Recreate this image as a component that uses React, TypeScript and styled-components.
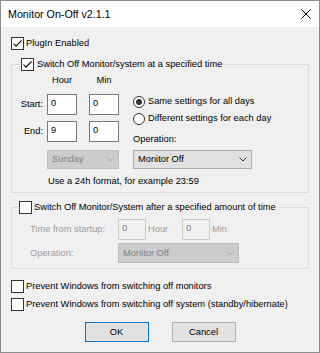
import styled, { createGlobalStyle } from "styled-components";

const GlobalStyle = createGlobalStyle`
  html, body {
    margin: 0;
    padding: 0;
    background: #fff;
  }
  body {
    font-family: "Liberation Sans", Arial, sans-serif;
    font-size: 9.3px;
    color: #000;
  }
`;

const Window = styled.div`
  width: 320px;
  height: 353px;
  box-sizing: border-box;
  border: 1px solid #8c8c8c;
  background: #f0f0f0;
  display: flex;
  flex-direction: column;
`;

const TitleBar = styled.div`
  height: 26px;
  flex-shrink: 0;
  background: #fff;
  display: flex;
  align-items: center;
  justify-content: space-between;
  padding: 0 8px 0 7px;
`;

const Title = styled.span`
  font-size: 10.7px;
  line-height: 13px;
`;

const Body = styled.div`
  display: flex;
  flex-direction: column;
  padding: 10px 10px 0;
`;

const CheckRow = styled.label<{ $gap?: number; $top?: number; $disabled?: boolean }>`
  display: flex;
  align-items: center;
  gap: ${(p) => p.$gap ?? 2}px;
  height: 13px;
  line-height: 13px;
  margin-top: ${(p) => p.$top ?? 0}px;
  color: ${(p) => (p.$disabled ? "#9d9d9d" : "#000")};
  white-space: nowrap;
`;

const Box = styled.span`
  width: 13px;
  height: 13px;
  box-sizing: border-box;
  border: 1px solid #333;
  background: #fff;
  display: flex;
  align-items: center;
  justify-content: center;
  flex-shrink: 0;
`;

const Group = styled.fieldset<{ $top: number }>`
  margin: ${(p) => p.$top}px 0 0;
  padding: 0;
  border: 1px solid #dcdcdc;
  min-width: 0;
`;

const Legend = styled.legend<{ $indent: number }>`
  margin-left: ${(p) => p.$indent}px;
  padding: 0 1px;
  height: 13px;
`;

const TimeLayout = styled.div`
  display: flex;
  gap: 14px;
`;

const Column = styled.div<{ $top?: number }>`
  display: flex;
  flex-direction: column;
  padding-top: ${(p) => p.$top ?? 0}px;
`;

const HeaderRow = styled.div`
  display: flex;
  gap: 12px;
  margin: 4px 0 0 35px;
  line-height: 11px;
`;

const HeaderCell = styled.span`
  width: 30px;
  text-align: center;
`;

const TimeRow = styled.div<{ $top: number }>`
  display: flex;
  align-items: center;
  margin-top: ${(p) => p.$top}px;
`;

const RowLabel = styled.span`
  width: 31px;
  margin-right: 4px;
  text-align: right;
  line-height: 13px;
`;

const NumberInput = styled.input<{ $width: number; $disabled?: boolean }>`
  width: ${(p) => p.$width}px;
  height: 21px;
  box-sizing: border-box;
  margin: 0;
  padding: 2px 0 6px 3px;
  border: 1px solid ${(p) => (p.$disabled ? "#cccccc" : "#7a7a7a")};
  background: ${(p) => (p.$disabled ? "#f0f0f0" : "#fff")};
  color: ${(p) => (p.$disabled ? "#7d7d7d" : "#000")};
  font: inherit;
  line-height: 11px;
  outline: none;
  border-radius: 0;
`;

const Gap = styled.span<{ $w: number }>`
  width: ${(p) => p.$w}px;
  flex-shrink: 0;
`;

const Combo = styled.div<{ $width: number; $height?: number; $top?: number; $disabled?: boolean }>`
  width: ${(p) => p.$width}px;
  height: ${(p) => p.$height ?? 19}px;
  margin-top: ${(p) => p.$top ?? 0}px;
  box-sizing: border-box;
  display: flex;
  align-items: center;
  justify-content: space-between;
  padding: 0 4px 0 4px;
  border: 1px solid ${(p) => (p.$disabled ? "#bfbfbf" : "#adadad")};
  background: ${(p) => (p.$disabled ? "#cccccc" : "#e1e1e1")};
  color: ${(p) => (p.$disabled ? "#838383" : "#000")};
  line-height: 13px;
`;

const RadioRow = styled.label<{ $top?: number }>`
  display: flex;
  align-items: center;
  gap: 3px;
  height: 13px;
  line-height: 13px;
  margin-top: ${(p) => p.$top ?? 0}px;
  white-space: nowrap;
`;

const RadioCircle = styled.span<{ $checked?: boolean }>`
  width: 12px;
  height: 12px;
  box-sizing: border-box;
  border: 1px solid #333;
  border-radius: 50%;
  background: #fff;
  display: flex;
  align-items: center;
  justify-content: center;
  flex-shrink: 0;

  &::after {
    content: "";
    width: 6px;
    height: 6px;
    border-radius: 50%;
    background: #333;
    display: ${(p) => (p.$checked ? "block" : "none")};
  }
`;

const Label = styled.span<{ $top?: number; $width?: number; $disabled?: boolean; $pad?: number }>`
  display: block;
  line-height: 13px;
  margin-top: ${(p) => p.$top ?? 0}px;
  width: ${(p) => (p.$width ? `${p.$width}px` : "auto")};
  padding-left: ${(p) => p.$pad ?? 0}px;
  box-sizing: border-box;
  flex-shrink: 0;
  color: ${(p) => (p.$disabled ? "#9d9d9d" : "#000")};
  white-space: nowrap;
`;

const Hint = styled.div`
  margin: 6px 0 0 36px;
  padding-bottom: 5px;
  line-height: 12px;
`;

const AfterContent = styled.div`
  padding: 5px 0 5px 18px;
`;

const FieldRow = styled.div<{ $top?: number }>`
  display: flex;
  align-items: center;
  margin-top: ${(p) => p.$top ?? 0}px;
`;

const ButtonRow = styled.div`
  display: flex;
  justify-content: center;
  gap: 23px;
  margin-top: 11px;
`;

const Button = styled.button<{ $primary?: boolean }>`
  width: 64px;
  height: 20px;
  margin: 0;
  padding: 0;
  box-sizing: border-box;
  border: 1px solid ${(p) => (p.$primary ? "#0078d7" : "#adadad")};
  background: #e1e1e1;
  color: #000;
  font: inherit;
  line-height: 13px;
  border-radius: 0;
`;

function Check({ checked }: { checked?: boolean }) {
  return (
    <Box>
      {checked && (
        <svg width="11" height="11" viewBox="0 0 11 11">
          <path d="M1.5 5.5 L4 8.2 L9.6 2.3" fill="none" stroke="#000" strokeWidth="1.1" />
        </svg>
      )}
    </Box>
  );
}

function Chevron({ color }: { color: string }) {
  return (
    <svg width="8" height="5" viewBox="0 0 8 5">
      <polyline points="0.5,0.5 4,4 7.5,0.5" fill="none" stroke={color} strokeWidth="1" />
    </svg>
  );
}

export default function App() {
  return (
    <>
      <GlobalStyle />
      <Window>
        <TitleBar>
          <Title>Monitor On-Off v2.1.1</Title>
          <svg width="10" height="10" viewBox="0 0 10 10">
            <path d="M0.5 0.5 L9.5 9.5 M9.5 0.5 L0.5 9.5" stroke="#000" strokeWidth="1" />
          </svg>
        </TitleBar>
        <Body>
          <CheckRow>
            <Check checked />
            PlugIn Enabled
          </CheckRow>

          <Group $top={8}>
            <Legend $indent={8}>
              <CheckRow $gap={3}>
                <Check checked />
                Switch Off Monitor/system at a specified time
              </CheckRow>
            </Legend>
            <TimeLayout>
              <Column>
                <HeaderRow>
                  <HeaderCell>Hour</HeaderCell>
                  <HeaderCell>Min</HeaderCell>
                </HeaderRow>
                <TimeRow $top={8}>
                  <RowLabel>Start:</RowLabel>
                  <NumberInput $width={30} value="0" readOnly />
                  <Gap $w={12} />
                  <NumberInput $width={30} value="0" readOnly />
                </TimeRow>
                <TimeRow $top={6}>
                  <RowLabel>End:</RowLabel>
                  <NumberInput $width={30} value="9" readOnly />
                  <Gap $w={12} />
                  <NumberInput $width={30} value="0" readOnly />
                </TimeRow>
                <TimeRow $top={8}>
                  <Gap $w={35} />
                  <Combo $width={72} $disabled>
                    Sunday
                    <Chevron color="#a8a8a8" />
                  </Combo>
                </TimeRow>
              </Column>
              <Column $top={24}>
                <RadioRow>
                  <RadioCircle $checked />
                  Same settings for all days
                </RadioRow>
                <RadioRow $top={4}>
                  <RadioCircle />
                  Different settings for each day
                </RadioRow>
                <Label $top={8}>Operation:</Label>
                <Combo $width={119} $top={4}>
                  Monitor Off
                  <Chevron color="#333" />
                </Combo>
              </Column>
            </TimeLayout>
            <Hint>Use a 24h format, for example 23:59</Hint>
          </Group>

          <Group $top={8}>
            <Legend $indent={6}>
              <CheckRow $gap={2}>
                <Check />
                Switch Off Monitor/System after a specified amount of time
              </CheckRow>
            </Legend>
            <AfterContent>
              <FieldRow>
                <Label $width={88} $disabled>
                  Time from startup:
                </Label>
                <NumberInput $width={28} $disabled value="0" readOnly />
                <Label $width={36} $pad={2} $disabled>
                  Hour
                </Label>
                <NumberInput $width={28} $disabled value="0" readOnly />
                <Label $pad={2} $disabled>
                  Min
                </Label>
              </FieldRow>
              <FieldRow $top={3}>
                <Label $width={88} $disabled>
                  Operation:
                </Label>
                <Combo $width={121} $height={20} $disabled>
                  Monitor Off
                  <Chevron color="#a8a8a8" />
                </Combo>
              </FieldRow>
            </AfterContent>
          </Group>

          <CheckRow $top={11}>
            <Check />
            Prevent Windows from switching off monitors
          </CheckRow>
          <CheckRow $top={5}>
            <Check />
            Prevent Windows from switching off system (standby/hibernate)
          </CheckRow>

          <ButtonRow>
            <Button $primary>OK</Button>
            <Button>Cancel</Button>
          </ButtonRow>
        </Body>
      </Window>
    </>
  );
}
